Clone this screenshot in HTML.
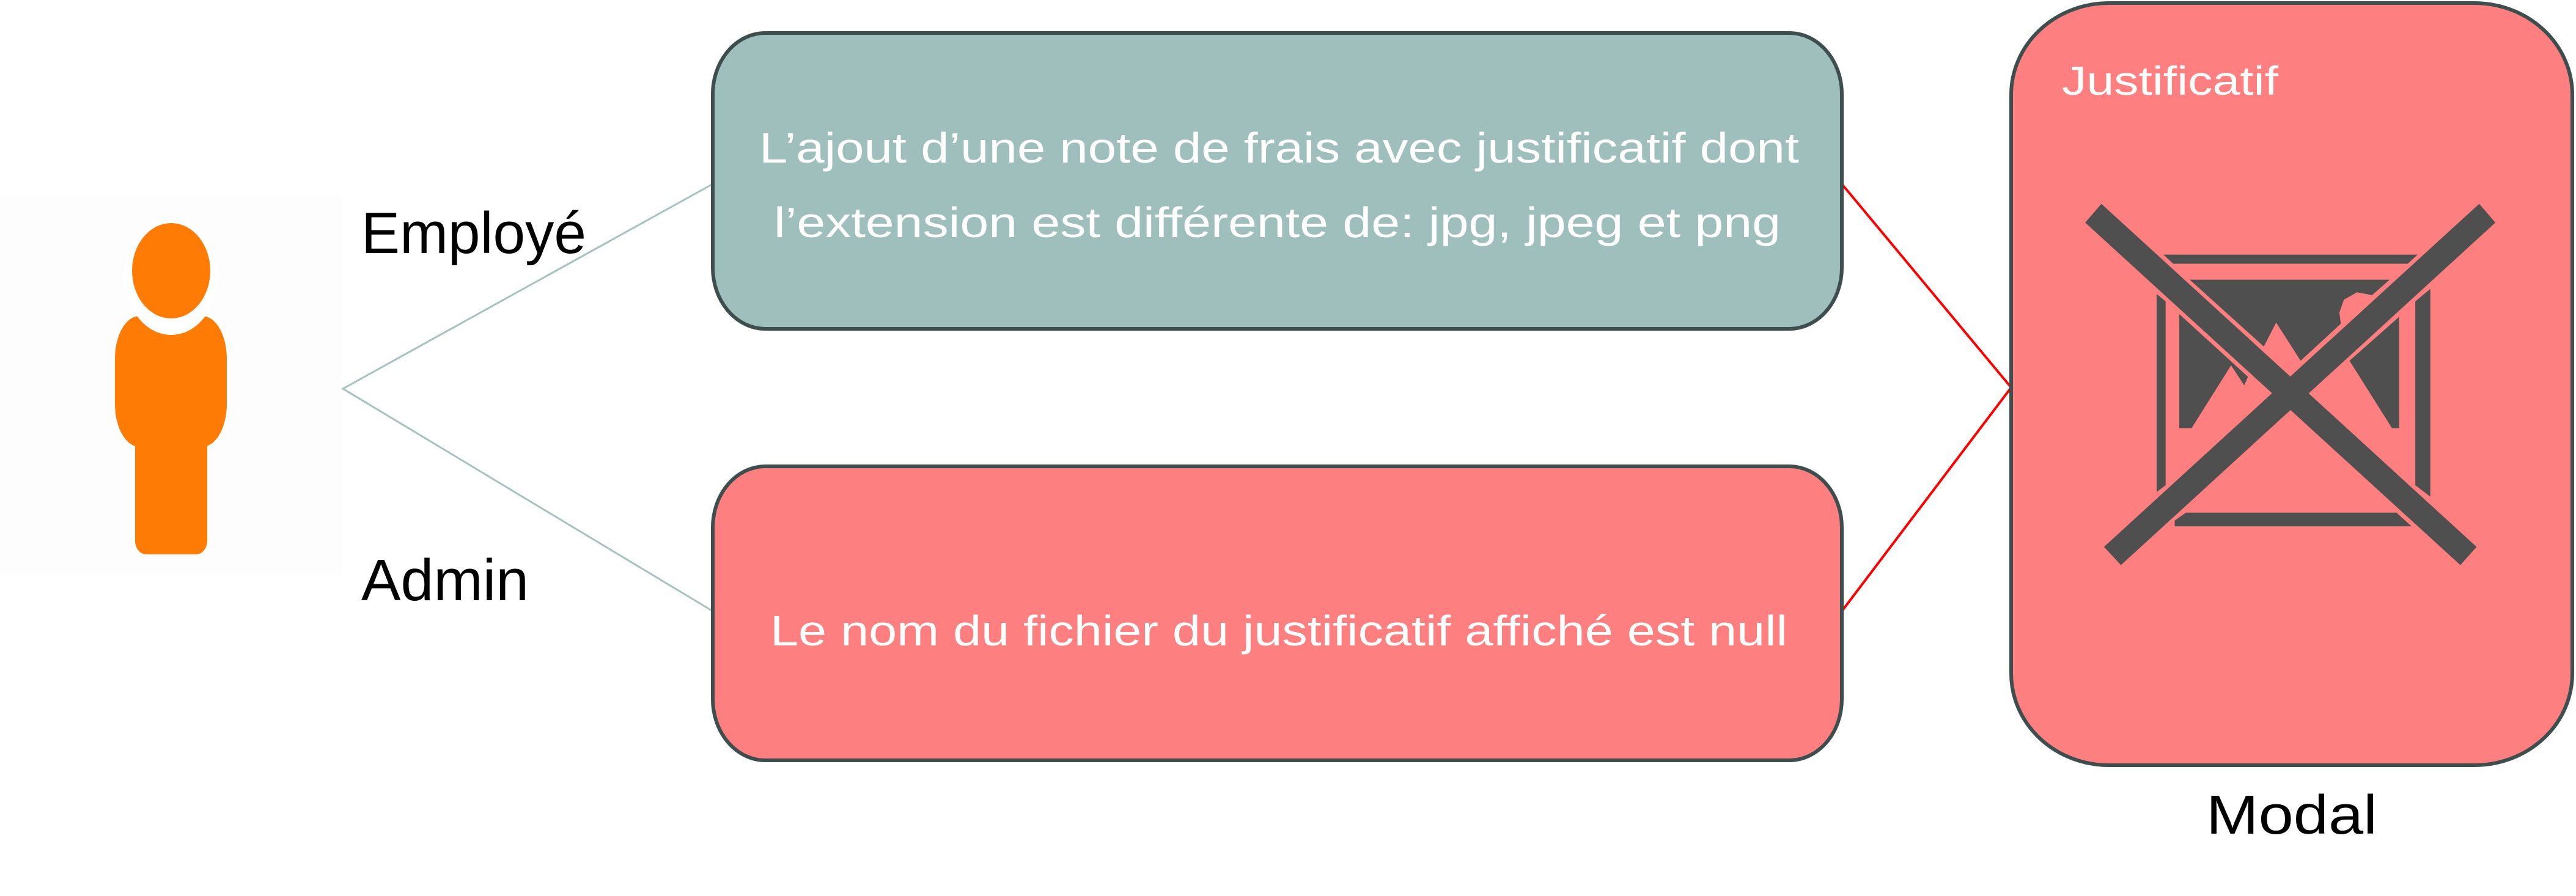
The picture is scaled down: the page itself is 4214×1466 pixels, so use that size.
<!DOCTYPE html>
<html><head><meta charset="utf-8"><style>html,body{margin:0;padding:0;background:#fff;}svg{display:block}</style></head>
<body>
<svg width="4214" height="1466" viewBox="0 0 4214 1466" xmlns="http://www.w3.org/2000/svg" font-family="'Liberation Sans', sans-serif">
<rect x="0" y="320" width="560" height="620" fill="#fdfdfd"/>
<!-- person -->
<rect x="188" y="517" width="183" height="214" rx="40" ry="70" fill="#fe7c06"/>
<rect x="221" y="700" width="118" height="207" rx="18" ry="22" fill="#fe7c06"/>
<ellipse cx="280" cy="452" rx="76" ry="96" fill="#fff"/>
<ellipse cx="280" cy="443" rx="64" ry="78" fill="#fe7c06"/>
<!-- connector lines -->
<polyline points="1166,301 561,636 1166,1000" fill="none" stroke="#a5c3c0" stroke-width="3"/>
<polyline points="3013,301 3290,634 3013,1000" fill="none" stroke="#ff0000" stroke-width="4"/>
<text x="591" y="414" font-size="96" fill="#000" textLength="368" lengthAdjust="spacingAndGlyphs">Employé</text>
<text x="591" y="982" font-size="96" fill="#000" textLength="274" lengthAdjust="spacingAndGlyphs">Admin</text>
<!-- box 1 -->
<rect x="1166" y="54" width="1847" height="484" rx="86" ry="100" fill="#9fbfbd" stroke="#3e4d4d" stroke-width="6"/>
<text x="1242" y="266" font-size="70" fill="#fff" textLength="1701" lengthAdjust="spacingAndGlyphs">L’ajout d’une note de frais avec justificatif dont</text>
<text x="1266" y="388" font-size="70" fill="#fff" textLength="1647" lengthAdjust="spacingAndGlyphs">l’extension est différente de: jpg, jpeg et png</text>
<!-- box 2 -->
<rect x="1166" y="763" width="1847" height="481" rx="86" ry="100" fill="#fe7f7f" stroke="#3e4d4d" stroke-width="6"/>
<text x="1260" y="1056" font-size="70" fill="#fff" textLength="1664" lengthAdjust="spacingAndGlyphs">Le nom du fichier du justificatif affiché est null</text>
<!-- modal -->
<rect x="3290" y="5" width="918" height="1247" rx="160" ry="150" fill="#fe7f7f" stroke="#3e4d4d" stroke-width="6"/>
<text x="3373" y="155" font-size="66" fill="#fff" textLength="354" lengthAdjust="spacingAndGlyphs">Justificatif</text>
<text x="3609" y="1364" font-size="90" fill="#000" textLength="280" lengthAdjust="spacingAndGlyphs">Modal</text>
<g transform="translate(3250,0) scale(0.615,0.934)" fill="#4f4f4f">
  <polygon points="470,446 1146,446 1120,462 496,462"/>
  <polygon points="500,912 530,898 1090,898 1130,922 500,922"/>
  <polygon points="452,515 476,528 476,850 452,862"/>
  <polygon points="1140,528 1180,506 1180,870 1140,850"/>
  <polygon points="540,490 1072,490 1025,517 985,512 950,525 938,548 942,567 835,632 770,565 737,607"/>
  <polygon points="512,550 695,660 685,675 650,640 545,750 512,750"/>
  <polygon points="965,632 1097,555 1097,750 1078,750"/>
  <polygon points="262,390 305,357 1303,958 1260,990"/>
  <polygon points="1310,357 1353,390 357,990 312,958"/>
</g>
</svg>
</body></html>
